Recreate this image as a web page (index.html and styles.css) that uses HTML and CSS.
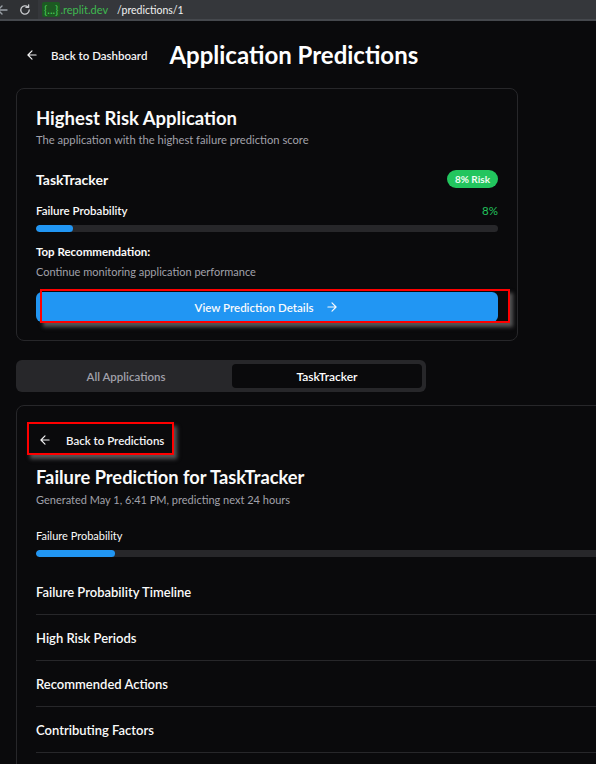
FILE: index.html
```html
<!DOCTYPE html>
<html lang="en">
<head>
<meta charset="utf-8">
<title>Application Predictions</title>
<link rel="stylesheet" href="styles.css">
</head>
<body>
<div class="chrome">
  <svg class="chrome-back" width="10" height="12" viewBox="0 0 10 12"><path d="M7 6H-2M2 2L-2 6L2 10" fill="none" stroke="#9aa0a6" stroke-width="1.4" stroke-linecap="round" stroke-linejoin="round"/></svg>
  <svg class="chrome-reload" width="12" height="12" viewBox="0 0 12 12"><path d="M10.2 6a4.2 4.2 0 1 1-1.3-3.05" fill="none" stroke="#c8cacd" stroke-width="1.3" stroke-linecap="round"/><path d="M9.6 0.8v2.6H7" fill="none" stroke="#c8cacd" stroke-width="1.3" stroke-linecap="round" stroke-linejoin="round"/></svg>
  <div class="url">
    <span class="url-chip">{...}</span><span class="url-host">.replit.dev</span>
    <span class="url-path">/predictions/1</span>
  </div>
</div>

<main class="page">
  <header class="header">
    <a class="back-link">
      <svg class="icon" width="14" height="14" viewBox="0 0 24 24"><path d="M19 12H5M12 19l-7-7 7-7" fill="none" stroke="currentColor" stroke-width="2" stroke-linecap="round" stroke-linejoin="round"/></svg>
      <span>Back to Dashboard</span>
    </a>
    <h1 class="page-title">Application Predictions</h1>
  </header>

  <section class="card card-risk">
    <h2 class="card-title">Highest Risk Application</h2>
    <p class="card-desc">The application with the highest failure prediction score</p>
    <div class="app-row">
      <span class="app-name">TaskTracker</span>
      <span class="badge">8% Risk</span>
    </div>
    <div class="prob-row">
      <span class="prob-label">Failure Probability</span>
      <span class="prob-value">8%</span>
    </div>
    <div class="bar"><div class="bar-fill" style="width:8%"></div></div>
    <div class="rec-label">Top Recommendation:</div>
    <div class="rec-text">Continue monitoring application performance</div>
    <div class="annotated annotated-primary">
      <button class="primary-btn">
        <span>View Prediction Details</span>
        <svg class="icon arrow-right" width="14" height="14" viewBox="0 0 24 24"><path d="M5 12h14M12 5l7 7-7 7" fill="none" stroke="currentColor" stroke-width="2" stroke-linecap="round" stroke-linejoin="round"/></svg>
      </button>
      <span class="mark mark-primary"></span>
    </div>
  </section>

  <div class="tabs">
    <div class="tab tab-all">All Applications</div>
    <div class="tab tab-active">TaskTracker</div>
  </div>

  <section class="card card-detail">
    <div class="annotated annotated-back">
      <button class="ghost-btn">
        <svg class="icon" width="14" height="14" viewBox="0 0 24 24"><path d="M19 12H5M12 19l-7-7 7-7" fill="none" stroke="currentColor" stroke-width="2" stroke-linecap="round" stroke-linejoin="round"/></svg>
        <span>Back to Predictions</span>
      </button>
      <span class="mark mark-back"></span>
    </div>
    <h2 class="detail-title">Failure Prediction for TaskTracker</h2>
    <p class="detail-desc">Generated May 1, 6:41 PM, predicting next 24 hours</p>
    <div class="detail-prob">Failure Probability</div>
    <div class="bar"><div class="bar-fill" style="width:8%"></div></div>
    <div class="accordion">
      <div class="acc-item">Failure Probability Timeline</div>
      <div class="acc-item">High Risk Periods</div>
      <div class="acc-item">Recommended Actions</div>
      <div class="acc-item">Contributing Factors</div>
    </div>
  </section>
</main>
</body>
</html>
```

FILE: styles.css
```css
html, body {
  margin: 0;
  padding: 0;
  width: 596px;
  height: 764px;
  overflow: hidden;
  background: #0a0a0c;
  color: #fafafa;
  font-family: Lato, "Liberation Sans", sans-serif;
}

* { box-sizing: border-box; }

/* browser chrome */
.chrome {
  height: 21px;
  background: #2f3134;
  border-bottom: 2px solid #45484d;
  display: flex;
  align-items: center;
}
.chrome-reload { margin-left: 9px; }
.url {
  margin-left: 7px;
  height: 19px;
  display: flex;
  align-items: center;
  background: #35373b;
  padding-left: 4px;
  font-size: 11px;
  flex: 1;
}
.url-chip {
  background: #1d5a22;
  color: #4cd05a;
  padding: 1px 2px;
  border-radius: 2px;
  line-height: 13px;
}
.url-host { color: #3fb950; }
.url-path { color: #f1f1f1; margin-left: 9px; font-size: 10.5px; }

.page {
  padding: 19px 0 0 16px;
}

/* header */
.header {
  height: 30px;
  display: flex;
  align-items: center;
}
.back-link {
  display: flex;
  align-items: center;
  gap: 12px;
  padding: 0 12px 0 9px;
  font-size: 11.5px;
  font-weight: 600;
  color: #f4f4f5;
}
.icon { flex: none; display: block; }
.page-title {
  margin: 0 0 0 10px;
  font-size: 24px;
  font-weight: 700;
  line-height: 30px;
  color: #ffffff;
}

/* cards */
.card {
  border: 1px solid #27272a;
  border-radius: 8px;
  background: #0a0a0c;
}
.card-risk {
  margin-top: 18px;
  width: 502px;
  padding: 17px 19px 18px 19px;
}
.card-title {
  margin: 0;
  font-size: 18.5px;
  font-weight: 700;
  line-height: 24px;
}
.card-desc {
  margin: 2px 0 0;
  font-size: 11.2px;
  line-height: 16px;
  color: #a1a1aa;
}
.app-row {
  margin-top: 22px;
  height: 18px;
  display: flex;
  justify-content: space-between;
  align-items: center;
}
.app-name {
  font-size: 14px;
  font-weight: 700;
}
.badge {
  background: #22c55e;
  color: #f0fdf4;
  font-size: 10px;
  font-weight: 700;
  height: 18px;
  line-height: 18px;
  padding: 0 8px;
  border-radius: 9px;
}
.prob-row {
  margin-top: 15px;
  display: flex;
  justify-content: space-between;
  font-size: 11.5px;
  line-height: 16px;
}
.prob-label { font-weight: 600; }
.prob-value { color: #22c55e; font-size: 11.5px; }
.bar {
  margin-top: 6px;
  height: 7px;
  background: #27272a;
  border-radius: 4px;
  overflow: hidden;
}
.bar-fill {
  height: 100%;
  background: #2196f3;
  border-radius: 4px;
}
.rec-label {
  margin-top: 12px;
  font-size: 11.5px;
  font-weight: 700;
  line-height: 16px;
}
.rec-text {
  margin-top: 4px;
  font-size: 11px;
  line-height: 16px;
  color: #a1a1aa;
}

.annotated { position: relative; }
.annotated-primary { margin-top: 12px; }
.annotated-back {
  display: inline-block;
  margin-left: -8px;
}
.primary-btn {
  width: 100%;
  height: 30px;
  border: 0;
  border-radius: 6px;
  background: #2196f3;
  color: #f8fafc;
  font-family: inherit;
  font-size: 11.5px;
  font-weight: 600;
  display: flex;
  align-items: center;
  justify-content: center;
  gap: 12px;
  padding: 0;
}
.mark {
  position: absolute;
  border: 2px solid #ff0000;
  box-shadow: 3px 4px 4px rgba(150, 150, 150, 0.55);
  pointer-events: none;
}
.mark-primary {
  left: 4px;
  top: -3px;
  width: 470px;
  height: 34px;
}

/* tabs */
.tabs {
  margin-top: 19px;
  width: 410px;
  height: 32px;
  background: #27272a;
  border-radius: 6px;
  padding: 4px 4px;
  display: grid;
  grid-template-columns: 212px 190px;
}
.tab {
  display: flex;
  align-items: center;
  justify-content: center;
  font-size: 11.5px;
  font-weight: 600;
  border-radius: 4px;
}
.tab-all { color: #a1a1aa; }
.tab-active {
  background: #0a0a0c;
  color: #ffffff;
  font-size: 12px;
}

/* detail card */
.card-detail {
  margin-top: 13px;
  width: 1028px;
  height: 420px;
  padding: 20px 19px 0 19px;
}
.ghost-btn {
  height: 28px;
  border: 0;
  background: #0a0a0c;
  color: #f4f4f5;
  font-family: inherit;
  font-size: 11.5px;
  font-weight: 600;
  display: flex;
  align-items: center;
  gap: 14px;
  padding: 0 12px 0 10px;
  border-radius: 4px;
}
.mark-back {
  left: -1px;
  top: -4px;
  width: 147px;
  height: 33px;
}
.detail-title {
  margin: 10px 0 0;
  font-size: 18.3px;
  font-weight: 700;
  line-height: 26px;
}
.detail-desc {
  margin: 2px 0 0;
  font-size: 11px;
  line-height: 16px;
  color: #a1a1aa;
}
.detail-prob {
  margin-top: 20px;
  font-size: 11px;
  line-height: 16px;
}
.accordion {
  margin-top: 12px;
}
.acc-item {
  height: 46px;
  border-bottom: 1px solid #27272a;
  display: flex;
  align-items: center;
  font-size: 13px;
  font-weight: 600;
}
```
